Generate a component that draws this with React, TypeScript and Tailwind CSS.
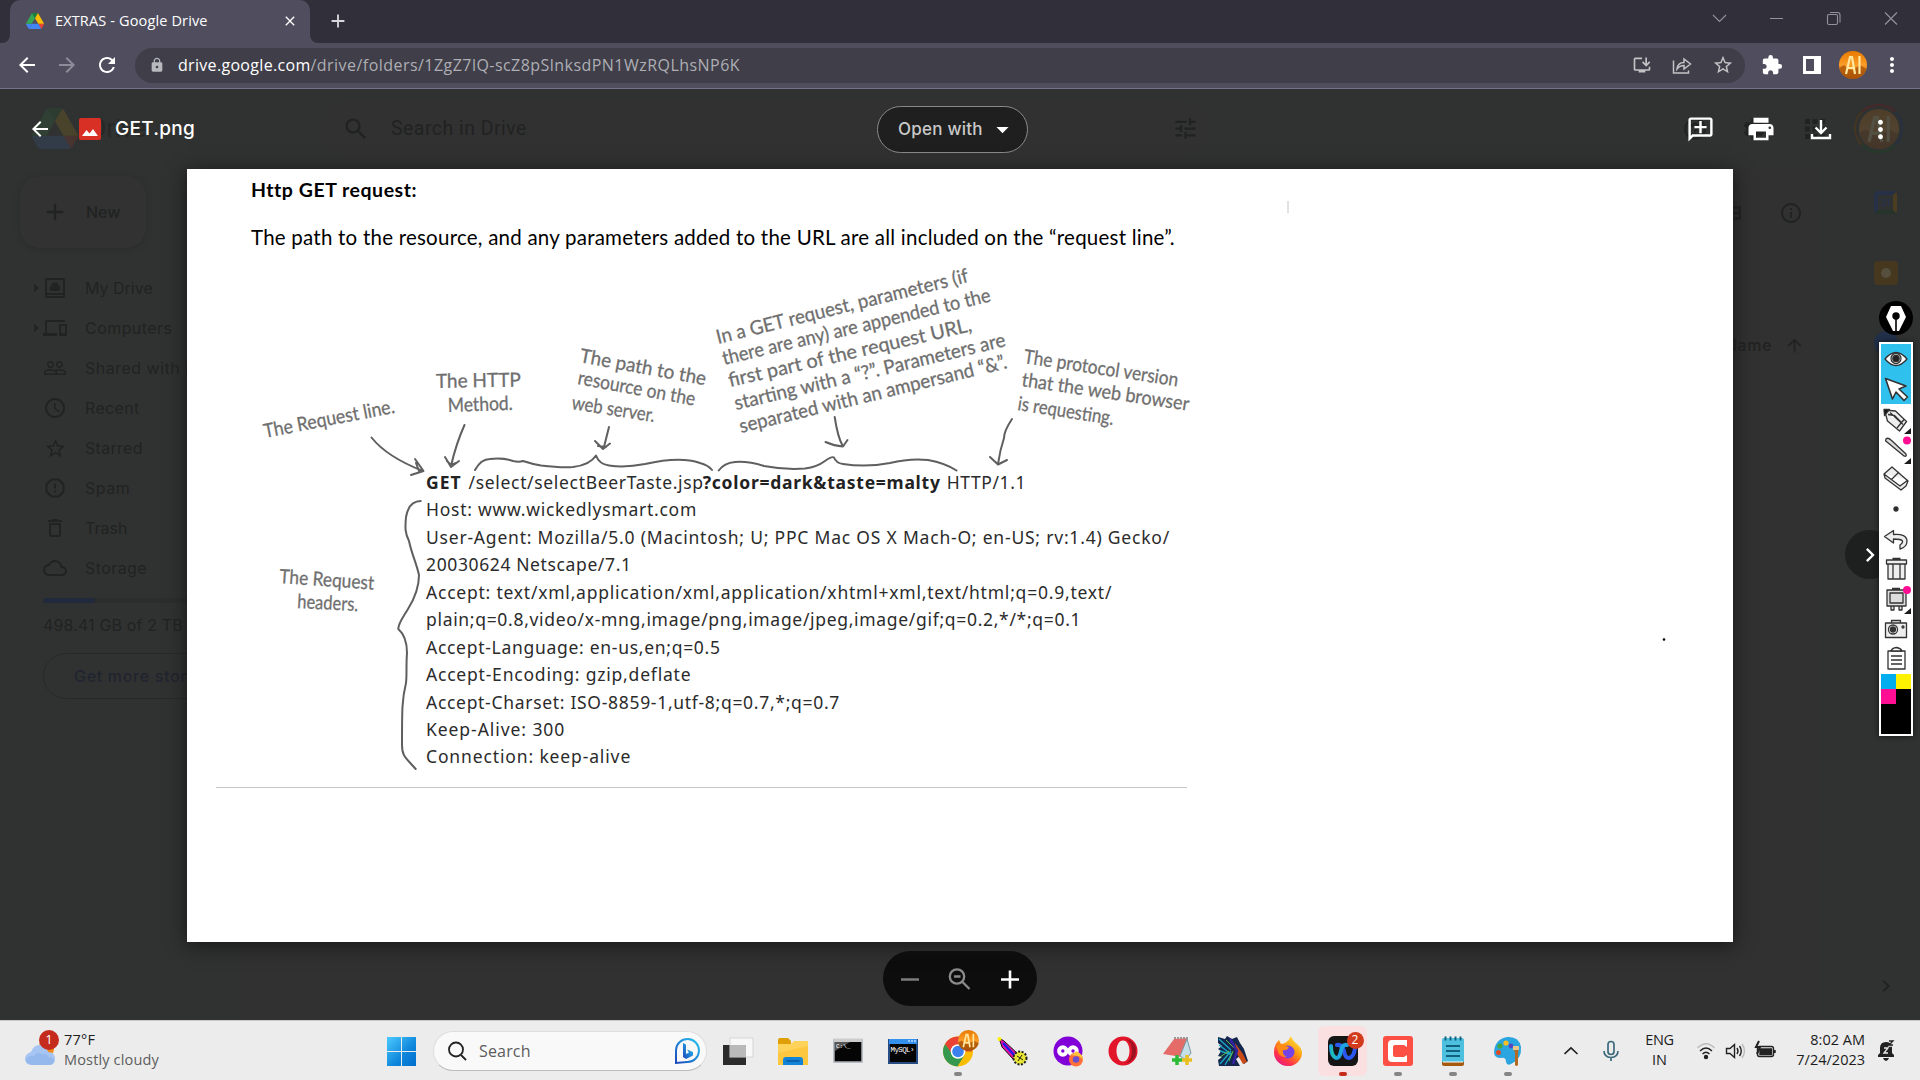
import { useLayoutEffect, useRef, useState, type ReactNode } from "react";
import {
  MdAccessTime, MdAdd, MdArrowBack, MdArrowDropDown, MdArrowForward, MdArrowUpward, MdChevronRight,
  MdCloudQueue, MdDeleteOutline, MdDevices, MdExtension, MdHelpOutline, MdApps, MdInfoOutline,
  MdInstallDesktop, MdLock, MdMoreVert, MdOutlineAddComment, MdPeopleOutline, MdPrint, MdRefresh,
  MdSearch, MdSettings, MdStarBorder, MdTune, MdClose, MdArrowRight,
} from "react-icons/md";

/** One line of text whose letter spacing is adjusted until it is `w` pixels wide. */
function Fit({ w, className = "", children }: { w: number; className?: string; children: ReactNode }) {
  const ref = useRef<HTMLSpanElement>(null);
  const [spacing, setSpacing] = useState(0);
  useLayoutEffect(() => {
    const el = ref.current;
    if (!el) return;
    const count = el.textContent?.length ?? 1;
    setSpacing((w - el.offsetWidth) / count);
  }, [w]);
  return (
    <span ref={ref} style={{ letterSpacing: spacing }} className={"inline-block whitespace-pre shrink-0 " + className}>
      {children}
    </span>
  );
}

function DriveLogo({ className = "" }: { className?: string }) {
  return (
    <svg viewBox="0 0 87.3 78" className={className}>
      <path d="m6.6 66.85 3.85 6.65c.8 1.4 1.95 2.5 3.3 3.3l13.75-23.8h-27.5c0 1.55.4 3.1 1.2 4.5z" fill="#4285f4" />
      <path d="m43.65 25-13.75-23.8c-1.35.8-2.5 1.9-3.3 3.3l-25.4 44a9.06 9.06 0 0 0-1.2 4.5h27.5z" fill="#34a853" />
      <path d="m73.55 76.8c1.35-.8 2.5-1.9 3.3-3.3l1.6-2.75 7.65-13.25c.8-1.4 1.2-2.95 1.2-4.5h-27.5l5.85 11.5z" fill="#ea4335" />
      <path d="m43.65 25 13.75-23.8c-1.35-.8-2.9-1.2-4.5-1.2h-18.5c-1.6 0-3.15.45-4.5 1.2z" fill="#188038" />
      <path d="m59.8 53h-32.3l-13.75 23.8c1.35.8 2.9 1.2 4.5 1.2h50.8c1.6 0 3.15-.45 4.5-1.2z" fill="#4285f4" />
      <path d="m73.4 26.5-12.7-22c-.8-1.4-1.95-2.5-3.3-3.3l-13.75 23.8 16.15 28h27.45c0-1.55-.4-3.1-1.2-4.5z" fill="#fbbc04" />
    </svg>
  );
}

function Avatar({ id, className = "" }: { id: string; className?: string }) {
  return (
    <svg viewBox="0 0 28 28" className={className}>
      <defs>
        <linearGradient id={id} x1="0" y1="0" x2="0" y2="1">
          <stop offset="0" stopColor="#e87a00" />
          <stop offset="0.5" stopColor="#fb9d28" />
          <stop offset="1" stopColor="#c05e05" />
        </linearGradient>
        <clipPath id={id + "c"}><circle cx="14" cy="14" r="14" /></clipPath>
      </defs>
      <g clipPath={`url(#${id}c)`}>
        <rect width="28" height="28" fill={`url(#${id})`} />
        <path d="M0 17 L5 14 L9 18 L14 19 L21 14 L28 18 V28 H0z" fill="#a34d06" opacity=".7" />
        <path d="M7 23 L11 6 H13 L16 23 M8 17 H15 M20.500 5 V23" fill="none" stroke="#ffe9a0" strokeWidth="2.200" />
      </g>
    </svg>
  );
}

function TabStrip() {
  return (
    <div className="flex h-[43px] items-end bg-[#302f3a]">
      <div className="h-2 w-[10px] bg-[#504e5e]"><div className="h-full w-full rounded-br-lg bg-[#302f3a]" /></div>
      <div className="flex h-full w-[300px] items-center rounded-t-[10px] bg-[#504e5e] pb-[2px] pl-4 pr-3 text-white">
        <DriveLogo className="h-4 w-[18px]" />
        <Fit w={153} className="ml-[11px] font-['Open_Sans'] text-[14.500px]">EXTRAS - Google Drive</Fit>
        <MdClose className="ml-auto size-[16px]" />
      </div>
      <div className="h-2 w-[10px] bg-[#504e5e]"><div className="h-full w-full rounded-bl-lg bg-[#302f3a]" /></div>
      <div className="flex h-full w-[35px] items-center justify-center pb-px text-[#d8d8dc]"><MdAdd className="size-[22px]" /></div>
      <div className="ml-auto flex h-9 items-center self-start text-[#94939c]">
        <svg width="201" height="36" viewBox="1700 0 201 36" fill="none" stroke="currentColor" strokeWidth="1.100">
          <path d="M1713 15l6.500 6.500 6.500-6.500M1770 18.500h13M1885 12.500l12 12m0-12l-12 12" />
          <rect x="1827.500" y="14.500" width="10" height="10" rx="1.500" />
          <path d="M1830 12.500h7.500q2.500 0 2.500 2.500v7.500" />
        </svg>
      </div>
      <div className="w-[19px]" />
    </div>
  );
}

function Toolbar() {
  return (
    <div className="flex h-[46px] items-center border-b border-[#75738a] bg-[#504e5e] pb-px text-white">
      <div className="flex w-[135px] items-center gap-4 pl-[15px] pb-px">
        <MdArrowBack className="size-6" />
        <MdArrowForward className="size-6 text-[#8d8c98]" />
        <MdRefresh className="size-6" />
      </div>
      <div className="flex h-[35px] w-[1610px] items-center rounded-full bg-[#3f3e49] pr-[11px] font-['Open_Sans'] text-[16px] text-[#aeaeb4]">
        <MdLock className="ml-[14px] size-[16px] text-[#b7b9be]" />
        <Fit w={133} className="ml-[13px] text-white">drive.google.com</Fit>
        <Fit w={430}>/drive/folders/1ZgZ7lQ-scZ8pSlnksdPN1WzRQLhsNP6K</Fit>
        <div className="ml-auto flex items-center gap-5 text-[#c3c3c6]">
          <MdInstallDesktop className="size-5" />
          <svg className="size-5" viewBox="0 0 20 20" fill="none" stroke="currentColor" strokeWidth="1.500">
            <path d="M1.500 5.500V18h15v-2.500M5 14c.5-4 3-6.500 7-6.500V4l6.500 5-6.500 5v-3.500c-3 0-5 1-7 3.500z" />
          </svg>
          <MdStarBorder className="size-[22px]" />
        </div>
      </div>
      <div className="flex flex-1 items-center pl-[16px]">
        <MdExtension className="size-[22px]" />
        <svg className="ml-[20px] size-[18px]" viewBox="0 0 18 18"><path fill="currentColor" fillRule="evenodd" d="M0 0h18v18H0zM3 3v12h8V3z" /></svg>
        <Avatar id="avTop" className="ml-[18px] size-7" />
        <MdMoreVert className="ml-[13px] size-6" />
      </div>
    </div>
  );
}

const navItems: { label: string; w: number; icon: ReactNode; arrow?: boolean }[] = [
  { label: "My Drive", w: 68, arrow: true, icon: (
    <svg className="size-[20px]" viewBox="0 0 20 20" fill="none" stroke="currentColor" strokeWidth="2"><rect x="1" y="1" width="18" height="18" rx="1" /><path d="M1 16h18M8.500 5.500h3l3 4.500-1 2h-7l-1-2zM10 7.500l2 3H8z" /></svg>) },
  { label: "Computers", w: 87, arrow: true, icon: <MdDevices className="size-6" /> },
  { label: "Shared with me", w: 125, icon: <MdPeopleOutline className="size-6" /> },
  { label: "Recent", w: 55, icon: <MdAccessTime className="size-6" /> },
  { label: "Starred", w: 58, icon: <MdStarBorder className="size-[23px]" /> },
  { label: "Spam", w: 45, icon: (
    <svg className="size-5" viewBox="0 0 20 20" fill="none" stroke="currentColor" strokeWidth="2"><path d="M6.500 1.500h7l5 5v7l-5 5h-7l-5-5v-7zM10 5.500v5M10 12.500v2" /></svg>) },
  { label: "Trash", w: 42, icon: <MdDeleteOutline className="size-6" /> },
  { label: "Storage", w: 62, icon: <MdCloudQueue className="size-6" /> },
];

/** The Drive page, dimmed by the preview that is open over it. */
function DimmedDrive() {
  return (
    <div className="flex h-full flex-col bg-[#303231] font-[Inter] text-[#212222]">
      <div className="flex h-[79px] items-center pl-8">
        <DriveLogo className="h-[41px] w-[46px] opacity-[0.12]" />
        <span className="ml-3 w-[50px] font-[Roboto] text-[25px] text-[#262827]">Drive</span>
        <div className="ml-[180px] flex h-[58px] w-[890px] items-center rounded-full bg-[#313131] pl-[22px] pr-[11px]">
          <MdSearch className="size-[28px]" />
          <Fit w={136} className="ml-[21px] font-[Roboto] text-[19.500px]">Search in Drive</Fit>
          <MdTune className="ml-auto size-[27px]" />
        </div>
        <div className="ml-auto flex items-center">
          <MdHelpOutline className="mr-[33px] size-[26px]" />
          <MdSettings className="mr-[33px] size-[26px]" />
          <MdApps className="mr-[24px] size-[30px]" />
          <div className="mr-[17px] flex size-[49px] items-center justify-center rounded-full border-2 border-[#28313f] border-t-[#47292a] border-l-[#433622] border-b-[#253a2a]">
            <Avatar id="avDim" className="size-10 opacity-[0.16]" />
          </div>
        </div>
      </div>
      <div className="flex flex-1">
        <div className="flex w-[240px] flex-col">
          <div className="ml-5 mt-[8px] flex h-[72px] w-[126px] items-center rounded-[20px] bg-[#323232] pl-[21px] shadow-[0_1px_5px_#2a2a2a]">
            <MdAdd className="size-[28px]" />
            <Fit w={35} className="ml-[17px] text-[16px] font-medium">New</Fit>
          </div>
          <div className="mt-[20px] flex flex-col">
            {navItems.map((item) => (
              <div key={item.label} className="flex h-10 items-center">
                <span className="ml-[26px] w-[16px]">{item.arrow && <MdArrowRight className="size-5" />}</span>
                <span className="flex w-[26px] justify-center">{item.icon}</span>
                <Fit w={item.w} className="ml-[17px] text-[16px]">{item.label}</Fit>
              </div>
            ))}
          </div>
          <div className="ml-[43px] mt-[10px] h-[5px] w-[180px] rounded-full bg-[#2d2d2d]"><div className="h-full w-[52px] rounded-full bg-[#202a3c]" /></div>
          <Fit w={182} className="ml-[43px] mt-[10px] self-start text-[16px]">498.41 GB of 2 TB used</Fit>
          <div className="ml-[43px] mt-[16px] flex h-[46px] w-[185px] items-center rounded-full border border-[#272928] pl-[30px] text-[#20242f]">
            <Fit w={144} className="text-[16px] font-medium">Get more storage</Fit>
          </div>
        </div>
        <div className="flex w-[1580px] flex-col bg-[#313131] pl-[1485px]">
          <div className="flex h-[92px] items-center">
            <svg className="-mt-[2px] h-4 w-[16px]" viewBox="0 0 16 14" fill="none" stroke="currentColor" strokeWidth="2.500"><path d="M0 1.500h15v11H0M0 7h15" /></svg>
            <MdInfoOutline className="-mt-[2px] ml-[38px] size-[24px]" />
          </div>
          <div className="mt-[75px] flex h-[20px] items-center">
            <Fit w={47} className="text-[16px] font-medium">Name</Fit>
            <MdArrowUpward className="ml-[12px] size-[21px]" />
          </div>
        </div>
        <div className="flex flex-1 flex-col items-center bg-[#303231]">
          <div className="ml-[31px] mt-[23px] flex size-[23px] items-center justify-center rounded-sm border-4 border-[#263046] border-b-[#25352b] border-r-[#4a3d20] text-[9px] font-bold text-[#28334a]">31</div>
          <div className="ml-[31px] mt-[47px] flex size-6 items-center justify-center rounded-sm bg-[#46381f]"><div className="size-2.5 rounded-full bg-[#574f3d]" /></div>
          <div className="ml-[31px] mt-[46px] size-6 rounded-full bg-[#212f49]" />
          <div className="ml-[31px] mt-[619px]"><MdChevronRight className="size-6" /></div>
        </div>
      </div>
    </div>
  );
}

const requestLines: [string, number][] = [
  ["Host: www.wickedlysmart.com", 271],
  ["User-Agent: Mozilla/5.0 (Macintosh; U; PPC Mac OS X Mach-O; en-US; rv:1.4) Gecko/", 744],
  ["20030624 Netscape/7.1", 206],
  ["Accept: text/xml,application/xml,application/xhtml+xml,text/html;q=0.9,text/", 686],
  ["plain;q=0.8,video/x-mng,image/png,image/jpeg,image/gif;q=0.2,*/*;q=0.1", 655],
  ["Accept-Language: en-us,en;q=0.5", 295],
  ["Accept-Encoding: gzip,deflate", 265],
  ["Accept-Charset: ISO-8859-1,utf-8;q=0.7,*;q=0.7", 414],
  ["Keep-Alive: 300", 139],
  ["Connection: keep-alive", 205],
];

const notes: [string, number, number, number, number][] = [
  ["The Request line.", 265, 438, 133, -11],
  ["The HTTP", 436, 388, 85, -1],
  ["Method.", 448, 412, 65, -2],
  ["The path to the", 579, 362, 128, 10.5],
  ["resource on the", 577, 384, 119, 10.5],
  ["web server.", 571, 409, 84, 9],
  ["In a GET request, parameters (if", 718, 344, 259, -13.9],
  ["there are any) are appended to the", 724, 365, 275, -13.4],
  ["first part of the request URL,", 730, 387, 249, -13],
  ["starting with a “?”. Parameters are", 736, 410, 278, -13.3],
  ["separated with an ampersand “&”.", 741, 433, 275, -13.7],
  ["The protocol version", 1023, 363, 156, 8.6],
  ["that the web browser", 1021, 386, 169, 8.4],
  ["is requesting.", 1017, 410, 97, 8.9],
  ["The Request", 279, 583, 95, 4],
  ["headers.", 297, 608, 61, 3],
];

/** Handwritten notes, arrows and braces around the request. */
function Annotations() {
  return (
    <svg className="pointer-events-none absolute inset-0 h-[773px] w-[1546px]" viewBox="187 169 1546 773">
      <g fill="#6f6f6f" stroke="#6f6f6f" strokeWidth=".3" className="font-[Lato] text-[19.500px]">
        {notes.map(([t, x, y, len, a]) => (
          <text key={t + y} transform={`translate(${x} ${y}) rotate(${a})`} textLength={len} lengthAdjust="spacingAndGlyphs">{t}</text>
        ))}
      </g>
      <g fill="none" stroke="#5f5f5f" strokeWidth="2" strokeLinecap="round" strokeLinejoin="round">
        <path d="M371.500 437.500Q387 457 423 471M415 459l8.500 12L411 475M416 463l3 8" />
        <path d="M464.500 425Q456 444 451 466M445 457l6 10 8-6M447 461l4 4 5-2" />
        <path d="M609 427l-5 20M595 441l8 8 7-5.500M598 446l8 1" />
        <path d="M834.700 417q3 20 8 29M825.500 442q9 4 17.500 4.500l4.500-6.500" />
        <path d="M1012 419q-8 12-8 19-4 12-6 26M990 457l8 7.500 9-4.500" />
        <path d="M475 470Q481 459 490 459Q503 457.500 513 461Q519 462.500 523 461Q532 464 541 465.500Q562 468 573 467Q590 465 596 455.500Q599 464 609 465.500Q625 468 645 464Q680 456 700 463Q708 465 712 470" />
        <path d="M718.700 470.500Q724 463 735 462Q748 461 764 466Q785 470 805 468.500Q817 467 825 461Q832 456 834 457.500Q836 463 843 464Q866 467.500 890 463Q910 458 928 460Q945 463 956.500 470.500" />
        <path d="M420.700 501C413 501 408 506 406 517C405 528 405 533 409 541C412 555 416 562 419 575C419 588 413 601 408 609C402 619 398 624 398.300 629C404 634 407 641 407 653C406 665 407 675 406 683C402 699 402 710 402 745C402 756 405 757 415.700 769" />
      </g>
      <path d="M216 787.500H1187" stroke="#c6c6c6" strokeWidth="1.200" />
      <path d="M1288 201v12" stroke="#c4c4c4" />
      <circle cx="1664" cy="639.500" r="1.300" />
    </svg>
  );
}

function Preview() {
  return (
    <div className="relative h-[773px] w-[1546px] bg-white pl-[64px] font-[Lato] text-black shadow-[0_3px_18px_#161616]">
      <div className="flex h-[44px] items-center pb-[3px]"><Fit w={165} className="text-[19.500px] font-bold">Http GET request:</Fit></div>
      <div className="flex h-[52px] items-center pb-[4px]"><Fit w={924} className="text-[20.500px]">The path to the resource, and any parameters added to the URL are all included on the “request line”.</Fit></div>
      <div className="ml-[175px] mt-[203px] flex flex-col font-['Noto_Sans'] text-[17.500px] text-[#2b2b2b]">
        <div className="flex h-[27.900px] items-center">
          <Fit w={36} className="font-bold text-[#222]">GET</Fit>
          <Fit w={235} className="ml-[7px]">/select/selectBeerTaste.jsp</Fit>
          <Fit w={238} className="-ml-px font-bold text-[#222]">?color=dark&amp;taste=malty</Fit>
          <Fit w={80} className="ml-[6px]">HTTP/1.1</Fit>
        </div>
        {requestLines.map(([t, w]) => (
          <div key={t} className="flex h-[27.450px] items-center"><Fit w={w}>{t}</Fit></div>
        ))}
      </div>
      <Annotations />
    </div>
  );
}

function Viewer() {
  return (
    <div className="absolute inset-0 flex flex-col items-center text-white">
      <div className="grid h-[80px] w-full grid-cols-[877px_151px_1fr] items-center">
        <div className="flex items-center pl-7">
          <MdArrowBack className="size-6" />
          <svg className="ml-[27px] h-[22px] w-[22px]" viewBox="0 0 22 22"><rect width="22" height="22" rx="2" fill="#d93025" /><path d="M3 18l4.500-6 3 3.500L14 11l5 7z" fill="#fff" /></svg>
          <Fit w={80} className="ml-[14px] font-[Inter] text-[19px] font-medium">GET.png</Fit>
        </div>
        <div className="flex h-[47px] items-center rounded-full border border-[#8a8a8a] bg-[#1f1f1f] pl-5">
          <Fit w={85} className="pt-[2px] font-[Inter] text-[17px] font-medium text-[#c9c9c9]">Open with</Fit>
          <MdArrowDropDown className="ml-[5px] size-[29px]" />
        </div>
        <div className="flex items-center justify-end gap-[31px] pr-[25.500px]">
          <MdOutlineAddComment className="size-[29px] -scale-x-100" />
          <MdPrint className="size-[30px]" />
          <svg className="size-[28px]" viewBox="0 0 28 28" fill="none" stroke="currentColor" strokeWidth="2.400"><path d="M14 5v13M8.500 12.500L14 18l5.500-5.500M5 19v4h18v-4" /></svg>
          <MdMoreVert className="size-[29px]" />
        </div>
      </div>
      <Preview />
      <div className="mt-[9px] flex h-[55px] w-[154px] items-center justify-center rounded-full bg-[#0d0d0d]">
        <svg className="h-[30px] w-[120px]" viewBox="0 0 120 30" fill="none">
          <path d="M1 15.500h18" stroke="#7d7d7d" strokeWidth="2.500" />
          <g stroke="#8b8b8b" strokeWidth="2.300"><circle cx="57" cy="12.500" r="7.200" /><path d="M62.500 18l7 7M54 12.500h6.500" /></g>
          <path d="M101 15.500h18M110 6.500v18" stroke="#fff" strokeWidth="2.600" />
        </svg>
      </div>
      <div className="absolute right-[26px] top-[441px] flex size-[49px] items-center justify-center rounded-full bg-[#1e1f1f]">
        <MdChevronRight className="size-7" />
      </div>
    </div>
  );
}

function EpicPen() {
  return (
    <div className="absolute left-[1879px] top-[301px] flex w-[34px] flex-col">
      <div className="flex size-[34px] items-center justify-center rounded-full bg-black">
        <svg className="h-[25px] w-[20px]" viewBox="0 0 20 25"><path d="M5 0h10l5 11-7 14H7L0 11z" fill="#fff" /><circle cx="10" cy="10" r="3.700" /><path d="M10 10v15" stroke="#000" strokeWidth="1.600" /></svg>
      </div>
      <div className="mt-[7px] w-[34px] border-2 border-white bg-white shadow-[0_0_5px_#111]">
        <svg className="block h-[330px] w-[30px]" viewBox="1881 344 30 330" fill="#fff" stroke="#333" strokeWidth="1.300" strokeLinejoin="round">
          <rect x="1881" y="344" width="30" height="60" fill="#30c0ee" stroke="none" />
          <path d="M1885 359q11-13 22 0q-11 13-22 0z" /><circle cx="1896" cy="358.500" r="5" /><circle cx="1896" cy="358.500" r="3.200" fill="#222" />
          <path d="M1885.500 378.500l20.500 7.500-7 3 8.500 8-3.500 3.500-8-8.500-3.500 7z" strokeWidth="1.600" />
          <path d="M1884.500 410l11 1 11 10.500-7 9.500-12-10z" fill="#eee" /><path d="M1888 414.500l6.500 1 7 7M1890 412.500l13 12M1904 419.500l-7 8.500" /><path d="M1884 409.500h5.500l-5 6z" fill="#111" />
          <path d="M1886 439q2-2 5 1l15 14q1 3-2 2l-17-14q-2-1-1-3z" fill="#ddd" />
          <path d="M1884 474l8-7 16 14-2 5-5 4-16-12zM1884 474l16 12 8-6M1891 480l8-8" fill="#eee" />
          <circle cx="1896" cy="509" r="2" fill="#222" />
          <path d="M1884.500 536.500l9-6v4q13-1 13.500 6.500 0 6-7 8v-4q3-2 2.500-4-1-2-9-2v4z" fill="#eee" />
          <path d="M1888 564h17v15h-17zM1886.500 560h20v4h-20zM1892.500 558.500h8M1893 564v15M1900 564v15" fill="#eee" />
          <path d="M1887 590h19v16h-19zM1890 593h13v10h-13zM1892 588.500h8M1891 606v4h3v-4M1899 606v4h3v-4" fill="#ddd" />
          <path d="M1885.500 623h21v14.500h-21zM1891.500 620.500h9v2.500h-9z" fill="#eee" /><circle cx="1893" cy="629.500" r="4.500" /><circle cx="1893" cy="629.500" r="2.500" fill="#333" /><circle cx="1903" cy="627" r="1" />
          <path d="M1888 651h17v18h-17z" /><path d="M1891 651q1-3 5.500-3.500 4 .5 5.500 3.500zM1891 656h11M1891 660h11M1891 664h11" />
          <g fill="#1c1c1c" stroke="none"><path d="M1911 428v6h-7zM1911 458v6h-7zM1911 608v6h-7z" /></g>
          <g fill="#ff0d92" stroke="none"><circle cx="1907" cy="440.500" r="4" /><circle cx="1907" cy="590" r="4" /></g>
        </svg>
        <div className="grid grid-cols-2">
          <div className="h-[15px] bg-[#00aeef]" /><div className="h-[15px] bg-[#fff200]" />
          <div className="h-[15px] bg-[#ff0d92]" /><div className="h-[15px] bg-black" />
          <div className="col-span-2 h-[30px] bg-black" />
        </div>
      </div>
    </div>
  );
}

const svg = "block size-[32px]";
const apps: { icon: ReactNode; mark?: string; tint?: string }[] = [
  { icon: <svg className={svg} viewBox="0 0 32 32"><rect x="1" y="10" width="23" height="20" fill="#2b2b2b" /><rect x="8" y="3" width="23" height="19" fill="#f8f8f8" stroke="#d5d5d5" /><rect x="8" y="10" width="16" height="12" fill="#b9b9b9" /></svg> },
  { icon: <svg className={svg} viewBox="0 0 32 32"><path d="M1 5q0-2 2-2h8l3 3v5H1z" fill="#dfa007" /><path d="M1 9h13l3-3h14v24H1z" fill="#ffd25a" /><path d="M1 18l30-7v19H1z" fill="#fbc02d" opacity=".6" /><path d="M6 30v-5q0-3 3-3h14q3 0 3 3v5z" fill="#1184d8" /><path d="M9.500 26h13" stroke="#075096" strokeWidth="1.300" /></svg> },
  { icon: <svg className={svg} viewBox="0 0 32 32"><rect x="2" y="4.500" width="28" height="22.500" fill="#050505" stroke="#a9b0b8" strokeWidth="1.500" /><path d="M2 4h28v3H2z" fill="#ccc" /><path d="M3 7h15L3 16z" fill="#555" /><text x="4" y="13" fontSize="6" fill="#fff" fontFamily="Liberation Mono">C:\_</text></svg> },
  { icon: <svg className={svg} viewBox="0 0 32 32"><rect x="2" y="5" width="28" height="23" fill="#050505" stroke="#274c83" strokeWidth="2" /><path d="M2 4h28v5H2z" fill="#3390ed" /><path d="M21 6h2m1 0h2m1 0h2" stroke="#fff" /><text x="3.500" y="17" fontSize="7.500" textLength="24" fill="#fff" fontFamily="Liberation Mono">MySQL›</text></svg> },
  { mark: "bg-[#858585]", icon: <div className="relative"><svg className={svg} viewBox="0 0 32 32"><circle cx="16" cy="16.500" r="15" fill="#fbbc04" /><path d="M16 16.500H30L29 9A15 15 0 0 0 3 9l7 11z" fill="#ea4335" /><path d="M3 9A15 15 0 0 0 15.500 31.500l7-11.500H11z" fill="#34984f" /><circle cx="16" cy="16.500" r="7.300" fill="#fff" /><circle cx="16" cy="16.500" r="5.800" fill="#3b80ee" /></svg><Avatar id="avTask" className="absolute -top-[5px] left-4 size-[21px]" /></div> },
  { icon: <svg className={svg} viewBox="0 0 32 32"><path d="M2 3l5 3 14 13-5 5L5 12z" fill="#e811a8" stroke="#111" /><path d="M6 8l12 13" stroke="#1c1ce8" strokeWidth="2.500" /><circle cx="2.500" cy="4" r="2" fill="#fdf100" /><circle cx="23" cy="23" r="6.500" fill="#e8e432" stroke="#222" strokeWidth="2" strokeDasharray="2 1.500" /><path d="M20 21l6 4m-5 1l4-6" stroke="#222" /></svg> },
  { icon: <svg className={svg} viewBox="0 0 32 32"><circle cx="16" cy="16" r="14.500" fill="#8100d7" /><g fill="none" stroke="#fff" strokeWidth="4"><circle cx="10.800" cy="16" r="3.700" /><circle cx="21" cy="16" r="3.700" /></g><circle cx="24" cy="24.500" r="7" fill="#ff7139" /><circle cx="24" cy="24.500" r="3.200" fill="#6b4fd0" /><path d="M18 20q4 0 6-4 7 3 7 9l-4-4z" fill="#ffc63d" /></svg> },
  { icon: <svg className={svg} viewBox="0 0 32 32"><path fillRule="evenodd" fill="#e2152b" d="M16 1.500a14.500 14.500 0 1 0 0 29a14.500 14.500 0 1 0 0-29zM16 5.500c4 0 6.500 5 6.500 10.500S20 26.500 16 26.500 9.500 21.500 9.500 16 12 5.500 16 5.500z" /><path d="M19 4q10 2 10 12t-10 12q6-3 6-12T19 4z" fill="#9b1220" /></svg> },
  { icon: <svg className={svg} viewBox="0 0 32 32"><path d="M12 4l14-1-6 19-19-3z" fill="#e46b68" /><path d="M25 4l4 14-5 7-6-4z" fill="#c4dfe8" stroke="#7a99a5" /><path d="M12 3h15" stroke="#999" strokeWidth="2" strokeDasharray="2 1" /><path d="M15 20v10m-5-5h10" stroke="#2dba35" strokeWidth="3.500" /><path d="M25 20v10m-5-5h10" stroke="#e9bf22" strokeWidth="3.500" /></svg> },
  { icon: <svg className={svg} viewBox="0 0 32 32"><path d="M1 2l7 2 2-3 5 3 5-2 3 6 4 6 4 12-4 3-4-8-4 3 4 7H2l-1-6 4-3-4-1 3-5-3-2 4-3-4-3z" fill="#13264d" /><path d="M2 4l12 11M2 10l12 9M3 29l11-13M3 16l10 3M8 30l7-12" stroke="#19a5c0" strokeWidth="1.400" /><path d="M18 8l8 11 4 8-4 2-6-10z" fill="#c74a17" /><path d="M9 5l8 8M12 26l4-10M3 22l9-6" stroke="#62c24a" /><path d="M13 4l7 12-4 13" stroke="#3323a0" strokeWidth="2.500" fill="none" /></svg> },
  { icon: <svg className={svg} viewBox="0 0 32 32"><defs><linearGradient id="ff" x1=".9" y1="0" x2=".2" y2="1"><stop offset="0" stopColor="#fff44f" /><stop offset=".45" stopColor="#ff980e" /><stop offset=".75" stopColor="#ff3647" /><stop offset="1" stopColor="#e31587" /></linearGradient></defs><path d="M19 1q1 4 6 8 5 4 5 9A14 13.500 0 0 1 2 17q0-7 5-12l2 4q6 0 10-8z" fill="url(#ff)" /><circle cx="16" cy="17" r="6.500" fill="#7542e5" /><path d="M4 11q5-3 9 0l4 1q-2 4-6 3-1 5 4 7-8 0-9-6z" fill="#ff8a16" /></svg> },
  { mark: "bg-[#c42b1c]", tint: "bg-[#fbe0e2]", icon: <div className="relative"><svg className={svg} viewBox="0 0 32 32"><rect x="1" y="1" width="30" height="30" rx="6" fill="#151515" /><path d="M10 10q5-1 7 6 1 7 5 7 5-1 6-10" fill="none" stroke="#2b58ef" strokeWidth="4" strokeLinecap="round" /><path d="M20 10q-5-1-6 6-1 7-5 7-5-2-5-12" fill="none" stroke="#1ea3e0" strokeWidth="4" strokeLinecap="round" /><path d="M4.500 12q0 8 4 11" fill="none" stroke="#1fcf9b" strokeWidth="2.500" opacity=".6" /></svg><span className="absolute -top-[3px] left-5 flex size-[17px] items-center justify-center rounded-full bg-[#d13a1c] font-['Open_Sans'] text-[12px] text-white">2</span></div> },
  { mark: "bg-[#858585]", icon: <svg className={svg} viewBox="0 0 32 32"><rect x="1" y="1" width="30" height="30" rx="3" fill="#fc5044" /><path d="M25 5v7l-3-2h-9q-2 0-2 2v8q0 2 2 2h9l3-2v7H10q-4 0-4-4V9q0-4 4-4z" fill="#fff" /></svg> },
  { mark: "bg-[#858585]", icon: <svg className={svg} viewBox="0 0 32 32"><rect x="5" y="3" width="22" height="27" rx="2" fill="#4dbfdf" /><path d="M5 27h22v2q0 2-2 2H7q-2 0-2-2z" fill="#a5590f" /><path d="M6 27h20" stroke="#fff" /><path d="M8.500 1.500v4m5-4v4m5-4v4m5-4v4M9 11h14M9 16h14M9 21h14" stroke="#11607e" strokeWidth="1.900" /></svg> },
  { mark: "bg-[#858585]", icon: <svg className={svg} viewBox="0 0 32 32"><path d="M15 2Q27 1 29 12q1 12-10 17-4 2-5-2 0-5-5-4Q2 23 2 17 3 4 15 2z" fill="#2ba5e0" /><circle cx="14" cy="8" r="2.600" fill="#f6c023" /><circle cx="8" cy="11" r="2.600" fill="#41a642" /><circle cx="6.500" cy="17.500" r="2.500" fill="#dc4b26" /><circle cx="19" cy="11" r="2.400" fill="#5546c8" /><path d="M21 11h6l-1 7v12q-2 2-3 0V18z" fill="#b56a22" /><path d="M21 11h6v4h-6z" fill="#e9c58b" /></svg> },
];

function Taskbar() {
  return (
    <div className="flex h-[60px] items-center border-t border-[#c9c9c9] bg-[#ececec] font-['Open_Sans'] text-[14.500px] text-[#1d1d1d]">
      <div className="flex w-[387px] items-center pb-[2px] pl-6">
        <div className="relative h-9 w-[33px]">
          <svg className="h-9 w-[33px]" viewBox="0 0 33 36"><circle cx="22" cy="17" r="8" fill="#f28a1b" /><path d="M7 33q-6-1-6-6t6-7q3-8 10-7 6 1 7 7 7 0 7 7 0 6-6 6z" fill="#a6c5f2" /><path d="M8 33q-6-1-6-5 2-5 8-4 3-5 8-2 5-1 6 3 6 0 6 3 0 5-6 5z" fill="#8cb0e9" opacity=".6" /></svg>
          <span className="absolute -top-[2px] left-[15px] flex size-5 items-center justify-center rounded-full bg-[#c42b1c] text-[13px] text-white">1</span>
        </div>
        <div className="ml-[7px] flex flex-col text-[14.500px] leading-5">
          <Fit w={31} className="self-start">77°F</Fit>
          <Fit w={95} className="text-[#5d5d5d]">Mostly cloudy</Fit>
        </div>
      </div>
      <svg className="h-[30px] w-[30px]" viewBox="0 0 30 30"><defs><linearGradient id="win" x1="0" y1="0" x2="1" y2="1"><stop offset="0" stopColor="#4ccbff" /><stop offset=".6" stopColor="#0e86db" /><stop offset="1" stopColor="#006fcc" /></linearGradient></defs><path d="M0 1h14v14H0zM15 1h14v14H15zM0 16h14v14H0zM15 16h14v14H15z" fill="url(#win)" /></svg>
      <div className="ml-4 flex h-10 w-[274px] items-center rounded-full border border-[#dedede] border-b-[#bdbdbd] bg-[#f9f9f9] pl-[13px] pr-[5px]">
        <svg className="size-5" viewBox="0 0 20 20" fill="none" stroke="#222" strokeWidth="1.800"><circle cx="9" cy="8.500" r="7" /><path d="M14 14l5 5" /></svg>
        <Fit w={52} className="ml-[12px] text-[16px] text-[#5c5c5c]">Search</Fit>
        <svg className="ml-auto size-[28px]" viewBox="0 0 28 28"><defs><linearGradient id="bing" x1="1" y1="0" x2="0" y2="1"><stop offset="0" stopColor="#27c6f0" /><stop offset="1" stopColor="#1b48bd" /></linearGradient></defs><path d="M3 26V13A11.500 11.500 0 1 1 14 25z" fill="none" stroke="url(#bing)" strokeWidth="2" /><path d="M10 6l3 1.500v9.500l3-1.500-2-3 6 2.500v3.500L13 22l-3-2z" fill="url(#bing)" /></svg>
      </div>
      <div className="ml-[3px] grid grid-cols-[repeat(15,55px)]">
        {apps.map((a, i) => (
          <div key={i} className="flex h-[58px] items-center justify-center">
            <div className={"relative flex h-[50px] w-[49px] items-center justify-center rounded-md " + (a.tint ?? "")}>
              {a.icon}
              {a.mark && <span className={"absolute bottom-0 h-1 w-2 rounded-full " + a.mark} />}
            </div>
          </div>
        ))}
      </div>
      <svg className="ml-[29px] h-10 w-[64px]" viewBox="1564 1030 64 40" fill="none" stroke="#222" strokeWidth="1.700"><path d="M1564.500 1053l6.500-6 6.500 6" /><rect x="1608" y="1040.500" width="6" height="13" rx="3" stroke="#3d6a7d" /><path d="M1604 1050q0 6 7 6.500 7-.5 7-6.500M1611 1056.500v3.500" stroke="#3d6a7d" /></svg>
      <div className="ml-[17px] flex w-[29px] flex-col items-center pb-px leading-5"><Fit w={29}>ENG</Fit><Fit w={15}>IN</Fit></div>
      <svg className="ml-[23px] h-[30px] w-[82px]" viewBox="1697 1035 82 30" fill="none" stroke="#222" strokeWidth="1.400">
        <path d="M1697.500 1047q8.500-8.500 17 0" stroke="#bbb" /><path d="M1700 1050q6-6 12 0M1702.500 1053q3.500-3.500 7 0" /><circle cx="1706" cy="1056" r="1.500" fill="#222" />
        <path d="M1726.500 1047.500h3.500l4.500-4v13l-4.500-4h-3.500zM1737 1047q2 3 0 6M1739.500 1045q3.500 5 0 10" /><path d="M1742 1043q5 7 0 14" stroke="#bbb" />
        <rect x="1757.500" y="1045.500" width="16" height="10" rx="2" /><path d="M1760 1048h11.500v5.500H1760z" fill="#222" /><path d="M1774.500 1049v3" strokeWidth="2.500" /><path d="M1759 1040l-3 6h4l-3 7" strokeWidth="2" />
      </svg>
      <div className="ml-[18px] flex w-[68px] flex-col items-end pb-[2px] leading-5"><Fit w={55}>8:02 AM</Fit><Fit w={69}>7/24/2023</Fit></div>
      <svg className="ml-[12px] h-[22px] w-[18px]" viewBox="0 0 18 22"><path d="M1 16V15l2-2V8q0-6 6-6 5 0 6 5v6l2 2v2H1zM6 18h6q-1 3-3 3t-3-3z" fill="#222" /><path d="M7 8h4l-4 5h4M12 1h4l-4 5h4" fill="none" stroke="#ececec" strokeWidth="1.300" /><path d="M12 1h4l-4 4h4" fill="none" stroke="#222" strokeWidth="1.300" /></svg>
    </div>
  );
}

export default function App() {
  return (
    <div className="relative flex h-[1080px] w-[1920px] flex-col overflow-hidden">
      <TabStrip />
      <Toolbar />
      <div className="relative h-[931px] overflow-hidden">
        <DimmedDrive />
        <Viewer />
      </div>
      <Taskbar />
      <EpicPen />
    </div>
  );
}
